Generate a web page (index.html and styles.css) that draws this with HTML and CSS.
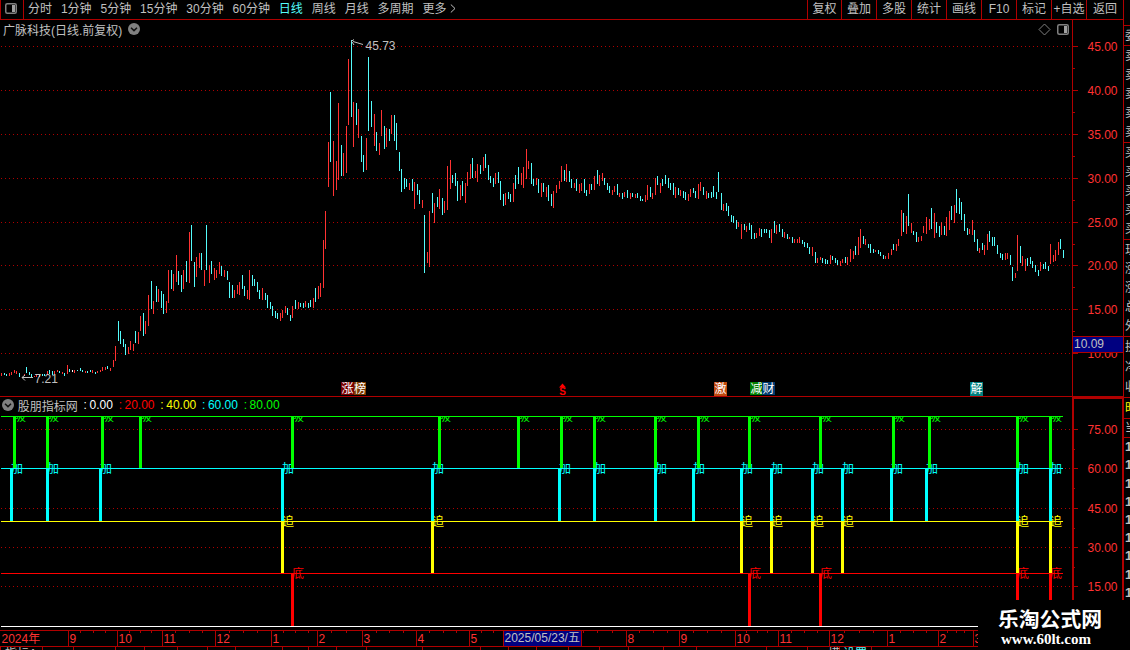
FILE: index.html
```html
<!DOCTYPE html>
<html lang="zh-CN">
<head>
  <meta charset="UTF-8">
  <title>广脉科技 日线</title>
  <link rel="stylesheet" href="styles.css">
</head>
<body>
  <div class="terminal">
    <div class="main">
      <div class="toolbar">
        <div class="layout-toggle">
          <svg width="12" height="11" viewBox="0 0 12 11"><rect x=".75" y=".75" width="10.5" height="9.5" rx="1.5" fill="none" stroke="#808080" stroke-width="1.5"/><rect x="7" y="2" width="3" height="7" fill="#a0a0a0"/></svg>
        </div>
        <div class="periods">
          <span>分时</span>
          <span>1分钟</span>
          <span>5分钟</span>
          <span>15分钟</span>
          <span>30分钟</span>
          <span>60分钟</span>
          <span class="active">日线</span>
          <span>周线</span>
          <span>月线</span>
          <span>多周期</span>
          <span class="more">更多<svg width="6" height="9" viewBox="0 0 6 9"><path d="M.8 .5L5 4.5L.8 8.5" fill="none" stroke="#c0c0c0"/></svg></span>
        </div>
        <div class="tools">
          <span>复权</span>
          <span>叠加</span>
          <span>多股</span>
          <span>统计</span>
          <span>画线</span>
          <span>F10</span>
          <span>标记</span>
          <span>+自选</span>
          <span>返回</span>
        </div>
      </div>

      <div class="panel">
        <svg class="plot" width="1123" height="376" viewBox="0 20 1123 376">
          <g id="priceGrid"></g>
          <path id="upBars" class="bar up"/>
          <path id="downBars" class="bar down"/>
          <path id="flatBars" class="bar flat"/>

          <path class="pointer" d="M363 44.5L353 41.5M351 41.5L354 39.5M352 42L354 45M22 377.5H33M22 377.5L25 375M22 377.5L25 380.5"/>
          <text class="mark" x="365.5" y="50">45.73</text>
          <text class="mark" x="34.5" y="383">7.21</text>

          <!-- event badges -->
          <g class="badge">
            <rect x="341" y="382" width="13" height="13" fill="#780000"/><text x="347.5" y="393">涨</text>
            <rect x="354" y="382" width="12" height="13" fill="#7c3a00"/><text x="360" y="393">榜</text>
            <rect x="714" y="382" width="13" height="14" fill="#c04a10"/><text x="720.5" y="393">激</text>
            <rect x="750" y="382" width="12" height="13" fill="#008000"/><text x="756.5" y="393">减</text>
            <rect x="762" y="382" width="13" height="13" fill="#003a70"/><text x="768.5" y="393">财</text>
            <rect x="970" y="382" width="13" height="14" fill="#008080"/><text x="976.5" y="393">解</text>
          </g>
          <path fill="#f00" d="M562.5 383.5L566 387.5H559Z"/>
          <text class="bonus" x="562.7" y="395">S</text>

          <path class="diamond" d="M1044.5 24L1050 29.5L1044.5 35L1039 29.5Z"/>
          <rect x="1057.75" y="24.75" width="10.5" height="9.5" rx="1.5" fill="none" stroke="#808080" stroke-width="1.5"/>
          <rect x="1064" y="26" width="3" height="7" fill="#a0a0a0"/>

          <g id="priceAxis"></g>
          <rect x="1073" y="337" width="50" height="15" fill="#000080"/>
          <path class="rule" d="M1072 336.5H1123M1072 352.5H1123"/>
          <text class="mark" x="1074" y="348">10.09</text>
        </svg>
        <div class="caption">
          广脉科技(日线.前复权)
          <svg width="12" height="12" viewBox="0 0 12 12"><circle cx="6" cy="6" r="6" fill="#808080"/><path d="M3 4.8L6 7.6L9 4.8" fill="none" stroke="#111" stroke-width="1.5"/></svg>
        </div>
      </div>

      <div class="panel lower">
        <svg class="plot" width="1123" height="234" viewBox="0 396 1123 234">
          <path class="rule" d="M0 396.5H1123"/>
          <g id="signalGrid"></g>
          <g class="levels">
            <path stroke="#0f0" d="M1 416.5H1063"/>
            <path stroke="#0ff" d="M1 468.5H1063"/>
            <path stroke="#ff0" d="M1 521.5H1063"/>
            <path stroke="#f00" d="M1 573.5H1063"/>
            <path stroke="#fff" d="M1 626.5H1063"/>
          </g>
          <clipPath id="belowTop"><rect x="0" y="417" width="1072" height="210"/></clipPath>
          <g id="signals" clip-path="url(#belowTop)"></g>
          <g id="signalAxis"></g>
        </svg>
        <div class="caption">
          <svg width="12" height="12" viewBox="0 0 12 12"><circle cx="6" cy="6" r="6" fill="#808080"/><path d="M3 4.8L6 7.6L9 4.8" fill="none" stroke="#111" stroke-width="1.5"/></svg>
          <span class="name">股朋指标网</span>
          <span class="val v0">: 0.00</span>
          <span class="val v20">: 20.00</span>
          <span class="val v40">: 40.00</span>
          <span class="val v60">: 60.00</span>
          <span class="val v80">: 80.00</span>
        </div>
      </div>

      <svg class="plot" width="1123" height="20" viewBox="0 630 1123 20">
        <g id="timeAxis"></g>
        <rect x="504" y="631" width="77" height="15" fill="#000080"/>
        <path class="rule" d="M503.5 630V646M581.5 630V646"/>
        <text class="mark" x="504.5" y="642">2025/05/23/五</text>
        <text class="mark" x="5" y="658">指标A</text>
        <text class="mark" x="828" y="658">模</text>
        <text class="mark tab-on" x="843" y="658">设置</text>
      </svg>
    </div>

    <div class="side">
      <div class="sec s1"><b>委</b></div>
      <div class="sec s2"><b>卖</b><b>卖</b><b>卖</b><b>卖</b><b>卖</b></div>
      <div class="sec s2"><b>买</b><b>买</b><b>买</b><b>买</b><b>买</b></div>
      <div class="sec s2"><b>现</b><b>涨</b><b>涨</b><b>总</b><b>外</b></div>
      <div class="sec s3"><b>换</b><b>净</b><b>收</b></div>
      <div class="sec s4"><b>时</b></div>
      <div class="sec s5"><b>当</b></div>
      <div class="sec s6"><b>1</b><b>1</b><b>1</b><b>1</b><b>1</b><b>1</b><b>1</b><b>1</b><b>1</b></div>
    </div>

    <div class="watermark">
      <div class="site">乐淘公式网</div>
      <div class="url">www.60lt.com</div>
    </div>
  </div>
  <script src="chart.js"></script>
</body>
</html>
```

FILE: styles.css
```css
body {
  margin: 0;
  background: #000;
  color: #c0c0c0;
  font-family: "Liberation Sans", "Noto Sans CJK SC", sans-serif;
  font-size: 12px;
}

.terminal {
  position: relative;
  display: flex;
  width: 1130px;
  height: 650px;
  overflow: hidden;
}

.main {
  width: 1123px;
  flex: none;
}

/* top toolbar */
.toolbar {
  display: flex;
  height: 19px;
  border-bottom: 1px solid #b00000;
  line-height: 19px;
  white-space: nowrap;
}

.layout-toggle {
  box-sizing: border-box;
  width: 24px;
  padding: 3px 0 0 4px;
  border-left: 1px solid #b00000;
  border-right: 1px solid #b00000;
}

.layout-toggle svg {
  display: block;
}

.periods {
  display: flex;
  gap: 8.9px;
  padding-left: 4px;
}

.periods .active {
  color: #54fcfc;
}

.more svg {
  margin-left: 4px;
}

.tools {
  display: grid;
  grid-template-columns: 34px repeat(7, 35px) 37px;
  margin-left: auto;
  text-align: center;
}

.tools span {
  height: 19px;
  border-left: 1px solid #b00000;
}

/* chart panels */
.panel {
  position: relative;
  height: 376px;
}

.panel.lower {
  height: 234px;
}

.plot {
  display: block;
}

.caption {
  position: absolute;
  top: 0;
  left: 3px;
  display: flex;
  align-items: center;
  height: 18px;
  gap: 6px;
  white-space: nowrap;
}

.lower .caption {
  left: 2px;
  gap: 5.8px;
}

.lower .caption .name {
  margin-left: -2px;
}

.val {
  word-spacing: -0.8px;
}

.v0 { color: #fff; }
.v20 { color: #f00; }
.v40 { color: #ff0; }
.v60 { color: #0ff; }
.v80 { color: #0f0; }

.bar,
.rule,
.levels path {
  fill: none;
  stroke-width: 1;
  shape-rendering: crispEdges;
}

.up { stroke: #ff3232; }
.down { stroke: #54fcfc; }
.flat { stroke: #fff; }
.rule { stroke: #b00000; }

.thick {
  stroke-width: 2;
}

.grid {
  stroke: #b00000;
  stroke-dasharray: 1 3;
  shape-rendering: crispEdges;
}

.label {
  fill: #ff3232;
}

.mark {
  fill: #c0c0c0;
}

.tab-on {
  fill: #54fcfc;
}

.pointer,
.diamond {
  fill: none;
  stroke: #c0c0c0;
}

.diamond {
  stroke: #808080;
}

.badge text {
  fill: #fff;
  text-anchor: middle;
}

.bonus {
  fill: #f00;
  font-size: 10px;
  font-weight: bold;
  text-anchor: middle;
}

/* quote column, only its left edge is on screen */
.side {
  box-sizing: border-box;
  width: 7px;
  padding-top: 25px;
  border-left: 1px solid #b00000;
  overflow: hidden;
}

.sec {
  box-sizing: border-box;
  display: flex;
  flex-direction: column;
  justify-content: space-around;
  height: 97px;
  padding-left: 1px;
  border-top: 1px solid #b00000;
  line-height: 12px;
}

.sec b {
  font-weight: normal;
  width: 12px;
}

.s1 { height: 20px; }
.s3 { height: 61px; }
.s4 { height: 21px; color: #ff0; }
.s5 { height: 19px; }
.s6 {
  height: 165px;
  font-size: 13px;
}

.s6 b {
  font-weight: bold;
}

.watermark {
  position: absolute;
  left: 978px;
  top: 600px;
  width: 152px;
  height: 50px;
  background: #000;
  color: #fff;
}

.site {
  padding: 4px 0 0 20px;
  font-family: "Noto Sans CJK SC", sans-serif;
  font-size: 20.8px;
  font-weight: bold;
  line-height: 28px;
  white-space: nowrap;
}

.url {
  padding-left: 23px;
  font-family: "Liberation Serif", serif;
  font-size: 15px;
  font-weight: bold;
  line-height: 14px;
}
```

FILE: chart.js
```js
// daily range bars: x top bottom
const up = `1 373 376,9 373 376,11 372 375,14 370 373,16 371 374,24 374 376,34 376 377,36 375 377,47 371 375,54 371 374,57 370 372,62 372 374,67 365 374,74 370 373,85 371 373,92 370 373,97 371 373,100 370 372,102 367 371,105 367 370,110 368 371,113 360 367,115 346 361,128 347 354,130 341 350,133 344 351,138 332 344,140 316 331,145 321 334,148 295 326,153 301 314,158 289 302,166 301 313,168 270 303,173 274 291,176 255 282,183 270 289,189 232 283,196 257 277,199 253 268,204 270 286,209 265 283,214 268 280,216 270 278,219 262 274,224 270 277,234 290 298,237 285 294,239 282 295,247 290 299,249 270 300,262 288 300,280 313 321,282 310 318,285 306 313,292 306 318,298 302 309,305 301 307,313 298 308,318 286 299,320 283 297,323 240 288,325 211 249,
328 142 187,333 141 196,336 161 190,338 103 180,343 153 176,346 126 173,348 59 125,353 102 147,358 109 138,366 138 170,374 114 146,379 143 155,381 110 136,386 128 147,391 115 134,409 183 190,414 182 209,422 200 208,427 252 263,429 211 267,434 203 223,439 189 209,444 201 213,447 166 210,450 160 189,460 185 200,465 183 203,467 172 186,470 164 179,475 171 178,477 164 182,483 157 171,495 173 184,505 193 205,513 183 202,521 173 185,523 167 188,526 149 179,528 161 169,536 178 185,541 183 197,546 187 197,553 191 208,556 185 193,559 181 189,561 166 182,566 164 182,574 183 188,579 184 193,581 183 191,589 184 194,594 176 190,599 175 186,602 173 181,612 190 195,614 186 192,619 193 197,624 192 197,630 193 199,635 194 198,645 195 202,647 185 200,652 193 199,655 178 195,660 183 193,675 187 198,680 190 196,688 194 201,690 189 197,698 184 199,700 182 191,706 191 199,723 204 211,738 222 227,741 224 239,746 226 232,756 233 238,759 228 236,771 229 243,776 225 234,784 232 238,789 237 239,794 239 243,797 239 243,799 237 243,812 247 256,817 258 263,
820 257 260,830 255 264,840 261 266,842 259 263,847 257 265,850 249 262,853 251 259,858 237 255,860 229 248,865 239 245,875 250 252,885 256 259,888 253 259,891 249 255,896 244 251,898 239 246,901 210 236,906 216 234,911 223 233,918 237 242,921 236 241,923 226 233,926 217 234,929 219 230,934 213 238,941 222 235,946 217 236,949 211 230,954 205 223,969 229 234,972 220 235,979 248 253,984 245 255,987 234 250,1005 253 260,1007 253 259,1015 273 278,1017 235 271,1022 256 266,1025 259 271,1040 262 271,1050 244 264,1053 255 262,1055 250 261,1058 242 255`;

const down = `4 373 375,6 374 376,19 373 377,26 367 373,29 372 375,31 374 377,42 374 376,44 374 376,49 370 374,52 371 375,59 371 373,64 373 376,69 369 372,77 370 371,80 368 371,82 370 372,87 371 373,90 370 372,95 372 374,107 366 369,118 321 341,120 331 344,123 339 347,125 344 355,135 331 343,143 313 336,151 281 309,156 286 302,161 291 308,163 294 314,171 270 289,178 271 285,181 275 292,186 261 282,191 225 261,194 262 287,201 253 270,206 225 270,211 261 274,221 266 276,227 271 280,229 282 298,232 285 298,242 275 289,244 286 296,252 275 286,254 279 286,257 282 292,259 290 299,265 293 300,267 295 308,270 302 309,272 306 316,275 311 318,277 313 319,287 308 315,290 315 321,295 300 309,300 303 307,303 303 308,308 303 308,310 300 307,315 288 302,
330 92 162,341 145 176,351 40 117,356 103 125,361 136 162,363 155 172,368 57 131,371 101 127,376 132 151,384 126 149,389 129 141,394 115 141,396 123 150,399 152 171,401 169 192,404 178 189,406 179 187,412 179 191,417 184 195,419 190 204,424 215 273,432 193 213,437 197 207,442 198 215,452 175 183,455 173 186,457 181 201,462 181 196,472 158 178,480 165 174,485 154 168,488 165 180,490 176 183,493 178 187,498 172 183,500 181 200,503 194 206,508 192 199,510 194 202,515 175 189,518 167 184,531 163 184,533 179 186,538 179 193,543 183 192,548 185 201,551 194 206,564 170 181,569 171 182,571 179 188,576 179 191,584 179 193,586 190 196,591 184 190,597 170 184,604 178 185,607 183 190,609 186 193,617 184 195,622 193 199,627 190 198,632 193 197,637 193 198,640 196 201,642 199 201,650 187 197,657 176 185,662 179 186,665 175 184,668 178 188,670 183 190,673 183 195,678 188 195,683 191 198,685 192 200,693 188 193,695 191 198,703 187 195,708 193 198,711 192 198,713 186 197,716 192 199,718 172 192,721 193 210,726 203 211,728 206 216,731 215 222,733 216 223,736 220 229,744 224 230,749 223 230,751 225 239,754 233 239,761 229 237,764 229 233,766 229 233,769 230 238,774 221 233,779 224 232,782 229 237,787 234 239,792 237 243,802 240 244,804 242 247,807 243 248,809 247 254,815 252 263,
822 258 263,825 259 264,827 260 264,832 256 260,835 258 263,837 260 265,845 257 263,855 246 255,863 236 244,868 244 248,870 244 253,873 249 253,878 250 254,880 252 256,883 255 259,893 244 250,903 213 232,908 194 226,913 231 235,916 232 242,931 208 229,936 222 233,939 226 237,944 226 235,951 206 220,956 189 213,959 198 214,961 202 220,964 214 231,967 228 235,974 230 242,977 239 251,982 243 250,989 231 242,992 237 246,994 237 246,997 245 254,1000 253 258,1002 254 260,1010 255 265,1012 267 281,1020 246 263,1027 258 266,1030 257 264,1032 261 268,1035 265 272,1038 270 276,1043 264 269,1045 262 269,1048 266 271,1060 239 249,1063 250 258`;

const flat = `39 374 377,72 370 372`;

function setBars(id, list) {
  const d = list.split(',').map(s => {
    const [x, top, bottom] = s.trim().split(' ').map(Number);
    return `M${x + 0.5} ${top}V${bottom}`;
  });
  document.getElementById(id).setAttribute('d', d.join(''));
}

function fill(id, html) {
  document.getElementById(id).innerHTML = html;
}

setBars('upBars', up);
setBars('downBars', down);
setBars('flatBars', flat);

// price axis
const prices = [[46, '45.00'], [90, '40.00'], [134, '35.00'], [178, '30.00'], [222, '25.00'], [265, '20.00'], [309, '15.00'], [353, '10.00']];
fill('priceGrid', prices.map(([y]) => `<path class="grid" d="M1 ${y + 0.5}H1072"/>`).join(''));
fill('priceAxis', '<path class="rule" d="M1072.5 20V396"/>' + prices.map(([y, t]) =>
  `<path class="rule" d="M1073 ${y + 0.5}H1078${y < 350 ? `M1073 ${y + 22.5}H1075` : ''}"/><text class="label" x="1087.5" y="${y + 5}">${t}</text>`
).join(''));

// indicator axis
const levels = [[429, '75.00'], [468, '60.00'], [508, '45.00'], [547, '30.00'], [586, '15.00']];
fill('signalGrid', levels.map(([y]) => `<path class="grid" d="M1 ${y + 0.5}H1072"/>`).join(''));
fill('signalAxis', '<path class="rule thick" d="M1073 630V398H1123V630"/>' + levels.map(([y, t]) =>
  `<path class="rule" d="M1074 ${y + 0.5}H1078M1074 ${y + 20.5}H1075"/><text class="label" x="1087.5" y="${y + 5}">${t}</text>`
).join(''));

// signal columns
const signals = [
  { text: '吸', color: '#0f0', top: 417, bottom: 468, xs: [13, 46, 101, 139, 291, 438, 517, 560, 593, 654, 697, 748, 819, 892, 928, 1016, 1049] },
  { text: '加', color: '#0ff', top: 469, bottom: 521, xs: [10, 46, 99, 281, 431, 558, 593, 654, 692, 740, 770, 811, 841, 890, 925, 1016, 1049] },
  { text: '追', color: '#ff0', top: 522, bottom: 573, xs: [281, 431, 740, 770, 811, 841, 1016, 1049] },
  { text: '底', color: '#f00', top: 574, bottom: 626, xs: [291, 748, 819, 1016, 1049] }
];
let marks = '';
let columns = '';
signals.forEach(s => s.xs.forEach(x => {
  marks += `<text x="${x + 1}" y="${s.top + 4}" fill="${s.color}">${s.text}</text>`;
  columns += `<rect x="${x}" y="${s.top}" width="3" height="${s.bottom - s.top}" fill="${s.color}"/>`;
}));
fill('signals', marks + columns);

// time axis
const months = [[0, '2024年'], [68, '9'], [117, '10'], [162, '11'], [215, '12'], [271, '1'], [317, '2'], [362, '3'], [416, '4'], [469, '5'], [626, '8'], [679, '9'], [735, '10'], [778, '11'], [829, '12'], [887, '1'], [938, '2'], [973, '3']];
const weeks = [80, 93, 105, 129, 140, 151, 175, 189, 202, 229, 243, 257, 283, 295, 308, 331, 346, 376, 389, 403, 429, 443, 456, 481, 493, 583, 597, 612, 639, 653, 667, 693, 707, 721, 746, 757, 767, 791, 804, 817, 844, 859, 873, 900, 913, 926, 947, 956, 964];
const tabs = [0, 42, 73, 115, 144, 177, 207, 235, 282, 308, 336, 366, 422, 480, 508, 536, 568, 599, 628, 663, 696, 766, 807, 839, 871];
let axis = 'M0 630.5H1123M0 646.5H1123';
months.forEach(([x]) => { if (x) axis += `M${x + 0.5} 630V646`; });
weeks.forEach(x => { axis += `M${x + 0.5} 631V633`; });
tabs.forEach(x => { axis += `M${x + 0.5} 647V650`; });
fill('timeAxis', `<path class="rule" d="${axis}"/>` +
  months.map(([x, t]) => `<text class="label" x="${x + 1.5}" y="643">${t}</text>`).join(''));
```
